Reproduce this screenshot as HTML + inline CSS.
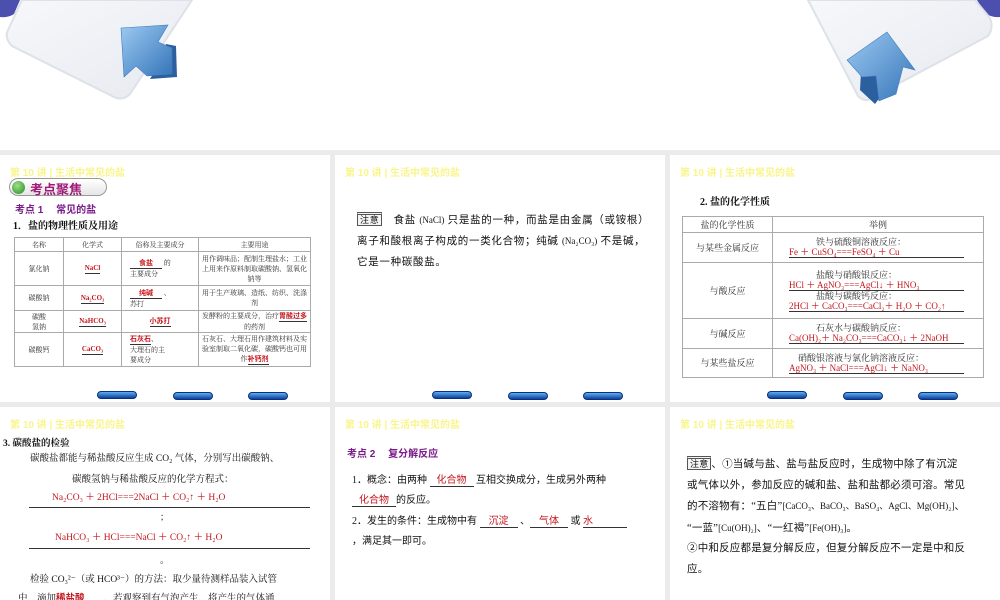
<!DOCTYPE html>
<html><head><meta charset="utf-8"><style>
*{margin:0;padding:0;box-sizing:border-box}
body{width:1000px;height:600px;overflow:hidden;background:#fff;font-family:"Liberation Serif","Noto Serif CJK SC","Noto Sans CJK SC",serif;position:relative;color:#111}
.p{position:absolute;background:#fff;overflow:hidden}
.a{position:absolute;white-space:nowrap}
.hd{position:absolute;left:10px;top:9px;font:bold 10px "Liberation Sans","Noto Sans CJK SC",sans-serif;color:#f9f58a}
.r{color:#c4161c;font-family:"Liberation Serif","Noto Sans CJK SC",serif;font-weight:bold}
.pu{color:#7a1a8a;font:bold 10px "Liberation Sans","Noto Sans CJK SC",sans-serif}
.sans{font-family:"Liberation Sans","Noto Sans CJK SC",sans-serif}
table{position:absolute;border-collapse:collapse}
td{border:1px solid #aaa;text-align:center;font-size:7px;color:#333;line-height:10px;padding:0}
.btn{position:absolute;width:40px;height:8px;border-radius:5px;background:linear-gradient(#5ab0f0,#0f3f9a);border:1px solid #0a2f80}
.u{display:inline-block;border-bottom:1px solid #333}
.note{display:inline-block;border:1px solid #555;border-top:3px double #555;font-size:9px;padding:0 2px;line-height:10px;background:#f4f4f4}
.ff{font-family:"Liberation Serif","Noto Sans CJK SC",sans-serif}
.sm{font-size:9px;letter-spacing:0}
</style></head><body>
<div style="position:absolute;left:0;top:150px;width:1000px;height:450px;background:#ebebeb"></div>
<svg style="position:absolute;left:0;top:0" width="1000" height="150">
<defs><linearGradient id="g" x1="0" y1="0" x2="1" y2="1"><stop offset="0" stop-color="#f6f8fb"/><stop offset="1" stop-color="#e6e9ef"/></linearGradient>
<linearGradient id="b" x1="0" y1="0" x2="1" y2="1"><stop offset="0" stop-color="#9ccaf2"/><stop offset="1" stop-color="#3574b8"/></linearGradient></defs>
<path d="M0 0 H20 L14 14 Q8 18 0 17Z" fill="#4d4fae"/>
<path d="M22 0 L8 30 Q4 38 12 46 L112 96 Q122 102 130 94 L192 0Z" fill="url(#g)" stroke="#dde1e8" stroke-width="2"/>
<path d="M166 44 L176 46 L177 77 L150 79 L158 66Z" fill="#2c5f9e"/>
<path d="M121 28 L168 25 L158 42 L172 48 L172 74 L147 76 L136 66 L124 77Z" fill="url(#b)" stroke="#3d7cc0" stroke-width=".6"/>
<path d="M1000 0 H977 L985 13 Q992 18 1000 17Z" fill="#4d4fae"/>
<path d="M808 0 L858 96 Q866 104 875 96 L988 36 Q994 28 990 18 L975 0Z" fill="url(#g)" stroke="#dde1e8" stroke-width="2"/>
<path d="M861 72 L860 90 L875 104 L884 92 L884 76Z" fill="#2c5f9e"/>
<path d="M887 32 L915 70 L903 67 L896 94 L879 101 L876 76 L862 77 L847 60Z" fill="url(#b)" stroke="#3d7cc0" stroke-width=".6"/>
</svg>

<!-- Panel 1 -->
<div class="p" style="left:0;top:155px;width:330px;height:247px">
<div class="hd">第 10 讲 | 生活中常见的盐</div>
<div class="a" style="left:9px;top:23px;width:98px;height:18px;border:1px solid #999;border-radius:9px;background:linear-gradient(#fff,#e6e6e6)"></div>
<div class="a" style="left:12px;top:26px;width:13px;height:13px;border-radius:50%;background:radial-gradient(circle at 40% 35%,#9fe08a,#1f8a1f)"></div>
<div class="a sans" style="left:30px;top:24px;font-size:13px;color:#a11a7a;font-weight:bold">考点聚焦</div>
<div class="a pu" style="left:15px;top:46px">考点 1　 常见的盐</div>
<div class="a" style="left:13px;top:62px;font-size:10px;font-weight:bold">1．盐的物理性质及用途</div>
<table style="left:14px;top:82px;width:297px">
<tr style="height:14px"><td style="width:49px">名称</td><td style="width:58px">化学式</td><td style="width:77px">俗称及主要成分</td><td>主要用途</td></tr>
<tr style="height:34px"><td>氯化钠</td><td><span class="r u">NaCl</span></td><td style="text-align:left;padding-left:8px"><span class="r u" style="width:32px;text-align:center">食盐</span> 的<br>主要成分</td><td>用作调味品；配制生理盐水；工业上用来作原料制取碳酸钠、氢氧化钠等</td></tr>
<tr style="height:25px"><td>碳酸钠</td><td><span class="r u">Na₂CO₃</span></td><td style="text-align:left;padding-left:8px"><span class="r u" style="width:32px;text-align:center">纯碱</span> 、<br>苏打</td><td>用于生产玻璃、造纸、纺织、洗涤剂</td></tr>
<tr style="height:22px"><td>碳酸<br>氢钠</td><td><span class="r u">NaHCO₃</span></td><td><span class="r u">小苏打</span></td><td>发酵粉的主要成分，治疗<span class="r u">胃酸过多</span> 的药剂</td></tr>
<tr style="height:34px"><td>碳酸钙</td><td><span class="r u">CaCO₃</span></td><td style="text-align:left;padding-left:8px"><span class="r u">石灰石</span>、<br>大理石的主<br>要成分</td><td>石灰石、大理石用作建筑材料及实验室制取二氧化碳，碳酸钙也可用作<span class="r u">补钙剂</span></td></tr>
</table>
<div class="btn" style="left:97px;top:236px"></div><div class="btn" style="left:173px;top:237px"></div><div class="btn" style="left:248px;top:237px"></div>
</div>

<!-- Panel 2 -->
<div class="p" style="left:335px;top:155px;width:330px;height:247px">
<div class="hd">第 10 讲 | 生活中常见的盐</div>
<div class="a ff" style="left:22px;top:55px;font-size:10.5px;line-height:21px;width:290px;white-space:normal;letter-spacing:.7px"><span class="note">注意</span>　食盐 <span class="sm">(NaCl)</span> 只是盐的一种，而盐是由金属（或铵根）离子和酸根离子构成的一类化合物；纯碱 <span class="sm">(Na₂CO₃)</span> 不是碱，它是一种碳酸盐。</div>
<div class="btn" style="left:97px;top:236px"></div><div class="btn" style="left:173px;top:237px"></div><div class="btn" style="left:248px;top:237px"></div>
</div>

<!-- Panel 3 -->
<div class="p" style="left:670px;top:155px;width:330px;height:247px">
<div class="hd">第 10 讲 | 生活中常见的盐</div>
<div class="a" style="left:30px;top:38px;font-size:10px;font-weight:bold">2. 盐的化学性质</div>
<table style="left:12px;top:61px;width:302px">
<tr style="height:16px"><td style="width:90px;font-size:9px">盐的化学性质</td><td style="font-size:9px">举例</td></tr>
<tr style="height:30px"><td style="font-size:9px">与某些金属反应</td><td style="font-size:9px;text-align:left;padding-left:16px">　　　铁与硫酸铜溶液反应：<br><span class="r u" style="width:175px;font-weight:normal">Fe ＋ CuSO₄===FeSO₄ ＋ Cu</span></td></tr>
<tr style="height:56px"><td style="font-size:9px">与酸反应</td><td style="font-size:9px;text-align:left;padding-left:16px">　　　盐酸与硝酸银反应：<br><span class="r u" style="width:175px;font-weight:normal">HCl ＋ AgNO₃===AgCl↓ ＋ HNO₃</span><br>　　　盐酸与碳酸钙反应：<br><span class="r u" style="width:175px;font-weight:normal">2HCl ＋ CaCO₃===CaCl₂＋ H₂O ＋ CO₂↑</span></td></tr>
<tr style="height:30px"><td style="font-size:9px">与碱反应</td><td style="font-size:9px;text-align:left;padding-left:16px">　　　石灰水与碳酸钠反应：<br><span class="r u" style="width:175px;font-weight:normal">Ca(OH)₂＋ Na₂CO₃===CaCO₃↓ ＋ 2NaOH</span></td></tr>
<tr style="height:29px"><td style="font-size:9px">与某些盐反应</td><td style="font-size:9px;text-align:left;padding-left:16px">　硝酸银溶液与氯化钠溶液反应：<br><span class="r u" style="width:175px;font-weight:normal">AgNO₃ ＋ NaCl===AgCl↓ ＋ NaNO₃</span></td></tr>
</table>
<div class="btn" style="left:97px;top:236px"></div><div class="btn" style="left:173px;top:237px"></div><div class="btn" style="left:248px;top:237px"></div>
</div>

<!-- Panel 4 -->
<div class="p" style="left:0;top:407px;width:330px;height:193px">
<div class="hd">第 10 讲 | 生活中常见的盐</div>
<div class="a" style="left:3px;top:28px;font-size:9.5px;font-weight:bold">3. 碳酸盐的检验</div>
<div class="a" style="left:30px;top:43px;font-size:9.5px">碳酸盐都能与稀盐酸反应生成 CO₂ 气体，分别写出碳酸钠、</div>
<div class="a" style="left:72px;top:64px;font-size:9.5px">碳酸氢钠与稀盐酸反应的化学方程式：</div>
<div class="a r" style="left:52px;top:82px;font-size:9.5px;font-weight:normal">Na₂CO₃ ＋ 2HCl===2NaCl ＋ CO₂↑ ＋ H₂O</div>
<div class="a" style="left:29px;top:100px;width:281px;border-top:1px solid #333"></div>
<div class="a" style="left:160px;top:103px;font-size:9px">；</div>
<div class="a r" style="left:55px;top:122px;font-size:9.5px;font-weight:normal">NaHCO₃ ＋ HCl===NaCl ＋ CO₂↑ ＋ H₂O</div>
<div class="a" style="left:29px;top:141px;width:281px;border-top:1px solid #333"></div>
<div class="a" style="left:160px;top:146px;font-size:9px">。</div>
<div class="a" style="left:30px;top:164px;font-size:9.5px">检验 CO₃²⁻（或 HCO³⁻）的方法：取少量待测样品装入试管</div>
<div class="a" style="left:18px;top:183px;font-size:9.5px">中，滴加<span class="r">稀盐酸</span>　　，若观察到有气泡产生，将产生的气体通</div>
</div>

<!-- Panel 5 -->
<div class="p" style="left:335px;top:407px;width:330px;height:193px">
<div class="hd">第 10 讲 | 生活中常见的盐</div>
<div class="a pu" style="left:12px;top:38px">考点 2　 复分解反应</div>
<div class="a ff" style="left:17px;top:64px;font-size:10px">1．概念：由两种 <span class="r u" style="width:44px;text-align:center;font-weight:normal">化合物</span> 互相交换成分，生成另外两种</div>
<div class="a ff" style="left:17px;top:84px;font-size:10px"><span class="r u" style="width:44px;text-align:center;font-weight:normal">化合物</span>的反应。</div>
<div class="a ff" style="left:17px;top:105px;font-size:10px">2．发生的条件：生成物中有 <span class="r u" style="width:38px;text-align:center;font-weight:normal">沉淀</span> 、<span class="r u" style="width:38px;text-align:center;font-weight:normal">气体</span> 或 <span class="r u" style="width:44px;font-weight:normal">水</span></div>
<div class="a ff" style="left:17px;top:125px;font-size:10px">，满足其一即可。</div>
</div>

<!-- Panel 6 -->
<div class="p" style="left:670px;top:407px;width:330px;height:193px">
<div class="hd">第 10 讲 | 生活中常见的盐</div>
<div class="a ff" style="left:17px;top:48px;font-size:10.5px;line-height:20.5px;width:296px;letter-spacing:.2px">
<span class="note">注意</span>、①当碱与盐、盐与盐反应时，生成物中除了有沉淀<br>或气体以外，参加反应的碱和盐、盐和盐都必须可溶。常见<br>的不溶物有：“五白”<span class="sm">[CaCO₃、BaCO₃、BaSO₄、AgCl、Mg(OH)₂]</span>、<br>“一蓝”<span class="sm">[Cu(OH)₂]</span>、“一红褐”<span class="sm">[Fe(OH)₃]</span>。<br>②中和反应都是复分解反应，但复分解反应不一定是中和反<br>应。</div>
</div>
</body></html>
